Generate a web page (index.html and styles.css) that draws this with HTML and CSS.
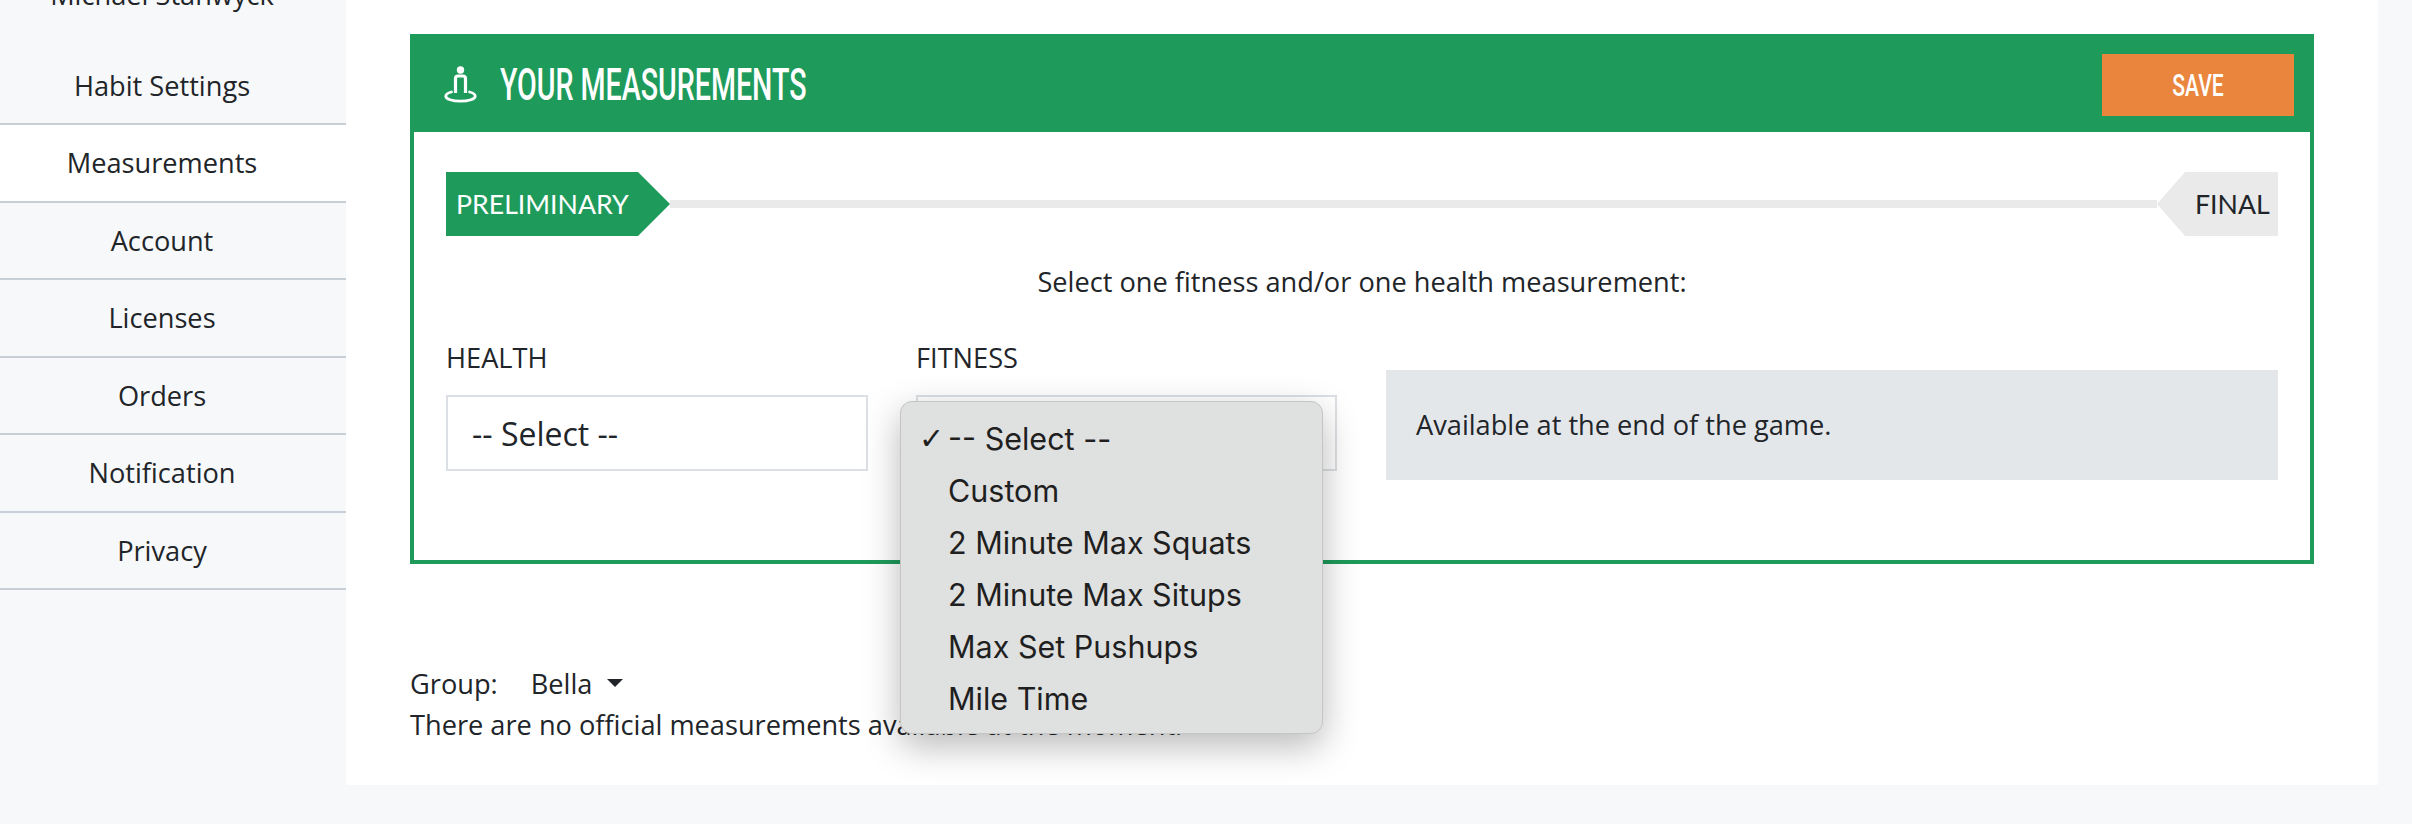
FILE: index.html
```html
<!DOCTYPE html>
<html lang="en">
<head>
    <meta charset="UTF-8">
    <title>Measurements</title>
    <link rel="stylesheet" href="styles.css">
</head>
<body>
    <aside class="sidebar">
        <div class="user-name">Michael Stanwyck</div>
        <nav class="side-nav">
            <a href="#">Habit Settings</a>
            <a href="#" class="active">Measurements</a>
            <a href="#">Account</a>
            <a href="#">Licenses</a>
            <a href="#">Orders</a>
            <a href="#">Notification</a>
            <a href="#">Privacy</a>
        </nav>
    </aside>

    <main class="content">
        <section class="panel">
            <header class="panel-head">
                <svg class="panel-icon" viewBox="0 0 34 38" width="34" height="38">
                    <circle cx="16.5" cy="4" r="3.7" fill="#fff"/>
                    <path d="M11.5 27V12.5a2.5 2.5 0 0 1 2.5-2.5h5a2.500 2.500 0 0 1 2.500 2.500V27" fill="none" stroke="#fff" stroke-width="3.2"/>
                    <path d="M7.500 26C3.500 27 1.800 28.500 1.800 30.200c0 2.800 6.500 5 14.700 5s14.700-2.200 14.700-5c0-1.700-1.700-3.200-5.700-4.200" fill="none" stroke="#fff" stroke-width="2.800" stroke-linecap="round"/>
                </svg>
                <h1 class="panel-title"><span>YOUR MEASUREMENTS</span></h1>
                <button class="save-btn"><span>SAVE</span></button>
            </header>

            <div class="panel-body">
                <div class="steps">
                    <div class="step step-first">PRELIMINARY</div>
                    <div class="step-line"></div>
                    <div class="step step-last">FINAL</div>
                </div>

                <p class="hint">Select one fitness and/or one health measurement:</p>

                <div class="fields">
                    <div class="field field-health">
                        <label>HEALTH</label>
                        <select><option>-- Select --</option></select>
                    </div>
                    <div class="field field-fitness">
                        <label>FITNESS</label>
                        <select><option>-- Select --</option></select>
                        <ul class="dropdown">
                            <li class="checked">-- Select --</li>
                            <li>Custom</li>
                            <li>2 Minute Max Squats</li>
                            <li>2 Minute Max Situps</li>
                            <li>Max Set Pushups</li>
                            <li>Mile Time</li>
                        </ul>
                    </div>
                    <div class="notice">Available at the end of the game.</div>
                </div>
            </div>
        </section>

        <div class="group-row">
            <span>Group:</span>
            <span class="group-name">Bella</span>
            <span class="caret"></span>
        </div>
        <p class="empty-msg">There are no official measurements available at the moment.</p>
    </main>
</body>
</html>
```

FILE: styles.css
```css
* {
    margin: 0;
    padding: 0;
    box-sizing: border-box;
}

body {
    display: flex;
    align-items: flex-start;
    height: 824px;
    overflow: hidden;
    background: #f7f8fa;
    color: #212529;
    font-family: "Open Sans", sans-serif;
    font-size: 27.2px;
}

/* Sidebar */
.sidebar {
    width: 346px;
    flex-shrink: 0;
}

.user-name {
    height: 47.5px;
    margin-top: -22px;
    margin-bottom: 22px;
    padding-right: 22px;
    line-height: 33px;
    text-align: center;
}

.side-nav a {
    display: flex;
    justify-content: center;
    align-items: center;
    height: 77.5px;
    padding-right: 22px;
    border-bottom: 2px solid #c8ced5;
    color: #212529;
    text-decoration: none;
}

.side-nav a.active {
    background: #fff;
}

/* Main area */
.content {
    width: 2032px;
    height: 785px;
    padding: 34px 64px 0;
    background: #fff;
}

.panel {
    border: 4px solid #1e9a5b;
    border-top: none;
    height: 530px;
}

.panel-head {
    display: flex;
    align-items: center;
    height: 98px;
    margin: 0 -4px;
    padding: 4px 20px 0 34px;
    background: #1e9a5b;
    color: #fff;
}

.panel-icon {
    flex-shrink: 0;
}

.panel-title {
    flex: 1;
    margin-left: 22px;
    font-family: "Roboto", sans-serif;
    font-size: 44px;
    font-weight: 500;
    line-height: 1;
}

/* no condensed face installed, so squeeze the normal one */
.panel-title span {
    display: inline-block;
    transform: scaleX(0.65);
    transform-origin: left center;
    white-space: nowrap;
}

.save-btn {
    width: 192px;
    height: 62px;
    border: none;
    background: #ea853e;
    color: #fff;
    font-family: "Roboto", sans-serif;
    font-size: 32px;
    font-weight: 500;
}

.save-btn span {
    display: inline-block;
    transform: scaleX(0.66);
}

.panel-body {
    padding: 40px 32px 0;
}

.steps {
    display: flex;
    align-items: center;
    height: 64px;
}

.step {
    display: flex;
    align-items: center;
    height: 64px;
    font-family: "Lato", sans-serif;
    font-size: 26.7px;
}

.step-first {
    width: 224px;
    padding-left: 10px;
    background: #1e9a5b;
    color: #fff;
    clip-path: polygon(0 0, 192px 0, 100% 50%, 192px 100%, 0 100%);
}

.step-last {
    width: 121px;
    padding-left: 38px;
    background: #eaeaea;
    clip-path: polygon(28px 0, 100% 0, 100% 100%, 28px 100%, 0 50%);
}

.step-line {
    flex: 1;
    height: 8px;
    background: #eaeaea;
}

.hint {
    margin-top: 30px;
    text-align: center;
    line-height: 32px;
}

.fields {
    display: flex;
    margin-top: 44px;
}

.field {
    position: relative;
    flex-shrink: 0;
}

.field-health {
    width: 422px;
    margin-right: 48px;
}

.field-fitness {
    width: 421px;
    margin-right: 49px;
}

.field label {
    display: block;
    height: 53px;
    line-height: 32px;
}

.field select {
    display: block;
    width: 100%;
    height: 76px;
    padding-left: 24px;
    border: 2px solid #dce0e4;
    border-radius: 0;
    background: #fff;
    color: #212529;
    font-family: "Open Sans", sans-serif;
    font-size: 32px;
    appearance: none;
}

.notice {
    flex: 1;
    height: 110px;
    margin-top: 28px;
    padding: 0 30px;
    background: #e4e7ea;
    line-height: 109px;
}

/* Open native select list */
.dropdown {
    position: absolute;
    top: 59px;
    left: -16px;
    width: 423px;
    height: 333px;
    padding-top: 11px;
    border: 1px solid #c4c5c4;
    border-radius: 12px;
    background: #dfe1e0;
    box-shadow: 0 12px 36px rgba(0, 0, 0, 0.28);
    list-style: none;
    font-family: "Inter", sans-serif;
    font-size: 30.5px;
    color: #1f1f1f;
}

.dropdown li {
    position: relative;
    height: 52px;
    padding-left: 47px;
    line-height: 52px;
}

.dropdown li.checked::before {
    content: "✓";
    position: absolute;
    left: 18px;
    font-family: "DejaVu Sans", sans-serif;
    font-size: 30px;
}

/* Below the panel */
.group-row {
    display: flex;
    align-items: center;
    margin-top: 100px;
    height: 38px;
}

.group-name {
    margin-left: 33px;
}

.caret {
    width: 0;
    height: 0;
    margin-left: 15px;
    border-left: 8px solid transparent;
    border-right: 8px solid transparent;
    border-top: 8px solid #212529;
}

.empty-msg {
    line-height: 46px;
}
```
